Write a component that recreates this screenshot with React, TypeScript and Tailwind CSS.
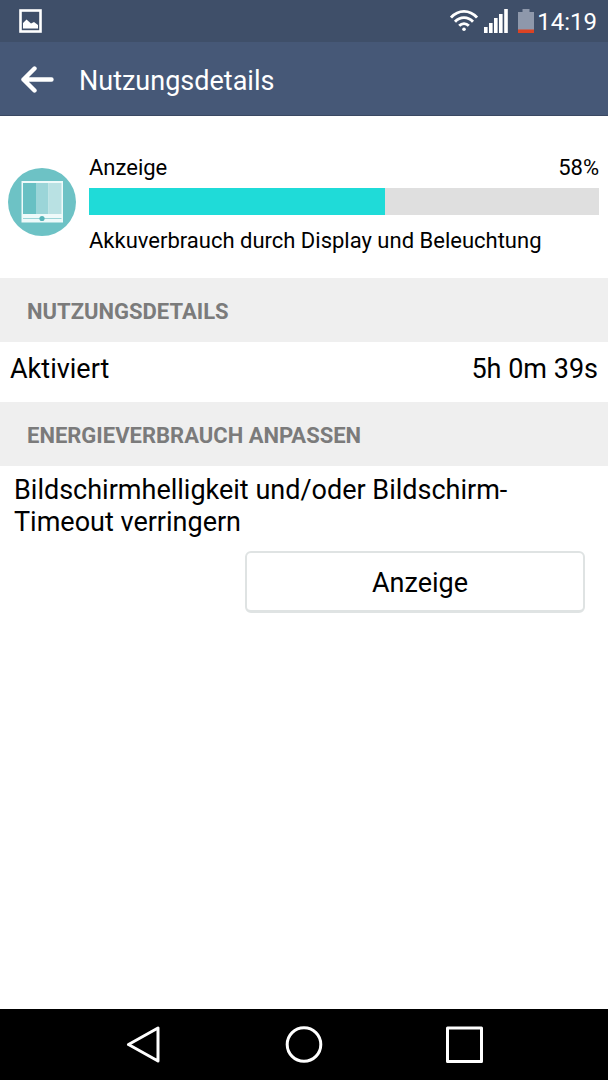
interface UsageItem {
  name: string;
  percent: number;
  description: string;
}

const usage: UsageItem[] = [
  {
    name: 'Anzeige',
    percent: 58,
    description: 'Akkuverbrauch durch Display und Beleuchtung',
  },
];

const StatusBar = () => (
  <div className="flex h-[42px] items-center justify-between bg-[#3f4f69] pr-[11px] pl-[19px] text-white">
    <svg width="23" height="24" viewBox="0 0 23 24" aria-hidden="true">
      <rect x="1.5" y="1.5" width="20" height="21" fill="none" stroke="currentColor" strokeWidth="2.6" />
      <path d="M4 19.5V14L7.5 10.5L12 14.5L15 13L19 16V19.5Z" fill="currentColor" />
    </svg>
    <div className="flex items-center">
      <svg width="28" height="22" viewBox="0 0 28 22" fill="none" stroke="currentColor" strokeWidth="2.8" aria-hidden="true">
        <path d="M1 7.6C8.5 -0.6 19.5 -0.6 27 7.6" />
        <path d="M5 11.8C10 6.3 18 6.3 23 11.8" />
        <path d="M9.2 15.8C12 12.8 16 12.8 18.8 15.8" />
        <circle cx="14" cy="19.2" r="1.8" fill="currentColor" stroke="none" />
      </svg>
      <svg className="ml-1.5" width="24" height="24" viewBox="0 0 24 24" fill="currentColor" aria-hidden="true">
        <rect x="0" y="18" width="3.6" height="6" />
        <rect x="5" y="14" width="3.6" height="10" />
        <rect x="10" y="9" width="3.6" height="15" />
        <rect x="15" y="5" width="3.6" height="19" />
        <rect x="20.2" y="0" width="3.6" height="24" />
      </svg>
      <svg className="ml-2.5" width="16" height="24" viewBox="0 0 16 24" aria-hidden="true">
        <path d="M4.5 0H11.5V3H16V21H0V3H4.5Z" fill="#8e98ab" />
        <rect y="20.5" width="16" height="3.5" fill="#dc4323" />
      </svg>
      <span className="ml-[3px] pt-0.5 text-2xl">14:19</span>
    </div>
  </div>
);

const Header = () => (
  <header className="flex h-[74px] items-center border-b border-[#3a4862] bg-[#465877] pl-5 text-white">
    <button type="button" aria-label="Zurück" className="mr-6">
      <svg width="35" height="28" viewBox="0 0 35 28" fill="none" stroke="currentColor" strokeWidth="4.4" strokeLinecap="round" strokeLinejoin="round">
        <path d="M31.5 14.5H3.5M14.5 3.5L3.5 14.5L14.5 25.5" />
      </svg>
    </button>
    <h1 className="pt-1 text-[27px] leading-8">Nutzungsdetails</h1>
  </header>
);

const DisplayIcon = () => (
  <svg className="shrink-0" width="68" height="68" viewBox="0 0 68 68" aria-hidden="true">
    <circle cx="34" cy="34" r="34" fill="#6dc2c5" />
    <rect x="13.5" y="13" width="41.5" height="41.5" fill="#eefafa" />
    <rect x="15" y="15" width="13" height="31" fill="#68c0c3" />
    <rect x="28" y="15" width="12.5" height="31" fill="#9bd5d8" />
    <rect x="40.5" y="15" width="13" height="31" fill="#b9e1e3" />
    <path d="M15 50.5H53.5" stroke="#9bd5d8" strokeWidth="1.2" />
    <circle cx="34" cy="50.5" r="2.6" fill="#56b4b8" />
  </svg>
);

const UsageRow = ({ item }: { item: UsageItem }) => (
  <section className="flex h-[162px] items-center gap-[13px] pr-[9px] pl-2 pt-2.5">
    <DisplayIcon />
    <div className="flex-1 pt-1 text-[22px] leading-8">
      <div className="flex justify-between">
        <span>{item.name}</span>
        <span>{item.percent}%</span>
      </div>
      <div className="mt-1 mb-2.5 h-[27px] bg-[#dfdfdf]">
        <div className="h-full bg-[#1fdbd8]" style={{ width: `${item.percent}%` }} />
      </div>
      <p>{item.description}</p>
    </div>
  </section>
);

const SectionTitle = ({ title }: { title: string }) => (
  <h2 className="flex h-16 items-center bg-[#efefef] px-[27px] pt-0.5 text-[22px] font-bold text-[#7b7b7b]">
    {title}
  </h2>
);

const NavBar = () => (
  <nav className="flex h-[71px] items-center justify-center gap-[122px] bg-black text-white">
    <button type="button" aria-label="Zurück">
      <svg width="38" height="38" viewBox="0 0 38 38" fill="none" stroke="currentColor" strokeWidth="3" strokeLinejoin="round">
        <path d="M3.5 18.5L33 2V35Z" />
      </svg>
    </button>
    <button type="button" aria-label="Startseite">
      <svg width="38" height="38" viewBox="0 0 38 38" fill="none" stroke="currentColor" strokeWidth="3">
        <circle cx="19" cy="18.5" r="16.8" />
      </svg>
    </button>
    <button type="button" aria-label="Übersicht">
      <svg width="38" height="38" viewBox="0 0 38 38" fill="none" stroke="currentColor" strokeWidth="3" strokeLinejoin="round">
        <rect x="2.5" y="2" width="34" height="33.5" />
      </svg>
    </button>
  </nav>
);

export default function App() {
  return (
    <div className="flex min-h-screen flex-col bg-white font-[Roboto,sans-serif] text-black">
      <StatusBar />
      <Header />
      <main className="flex-1">
        {usage.map((item) => (
          <UsageRow key={item.name} item={item} />
        ))}
        <SectionTitle title="NUTZUNGSDETAILS" />
        <dl className="flex h-[60px] justify-between px-2.5 pt-[11px] text-[27px] leading-8">
          <dt>Aktiviert</dt>
          <dd>5h 0m 39s</dd>
        </dl>
        <SectionTitle title="ENERGIEVERBRAUCH ANPASSEN" />
        <div className="flex flex-col px-3.5 pt-2 text-[27px] leading-8">
          <p>Bildschirmhelligkeit und/oder Bildschirm-Timeout verringern</p>
          <button
            type="button"
            className="mt-[13px] mr-[9px] h-[62px] w-[340px] self-end rounded-md border-2 border-b-[3px] border-[#dfe3e3] bg-white pt-0.5 pl-2.5"
          >
            Anzeige
          </button>
        </div>
      </main>
      <NavBar />
    </div>
  );
}
